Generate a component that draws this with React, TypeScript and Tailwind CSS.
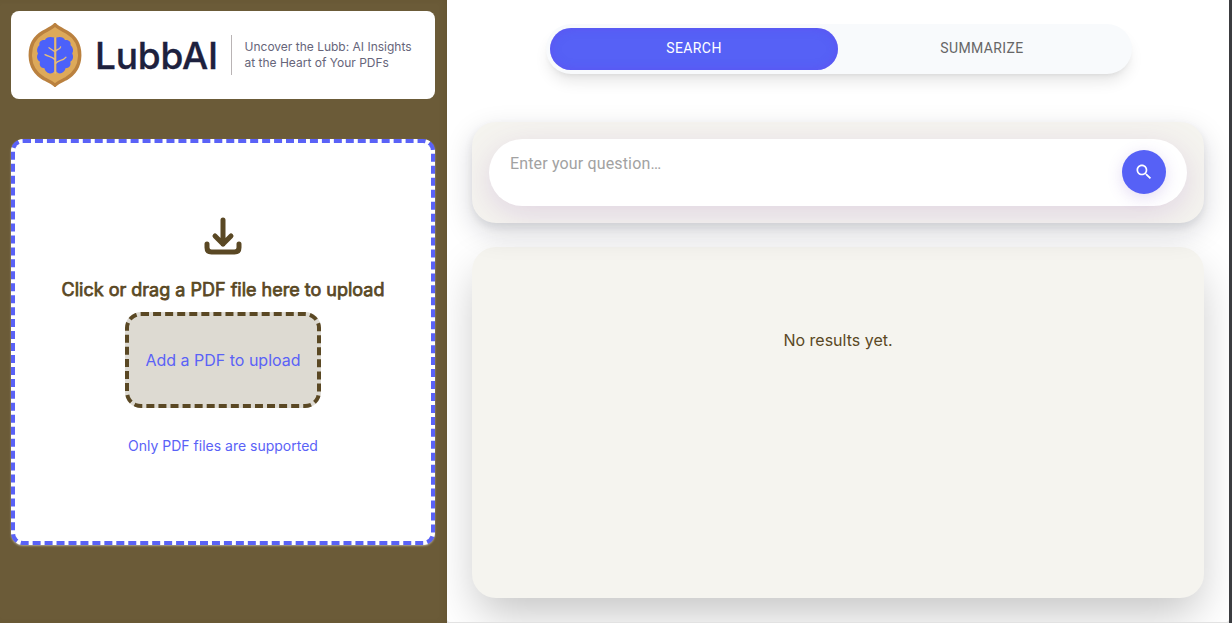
import React from "react";

function WalnutLogo() {
  return (
    <svg className="block h-16 w-[54px] shrink-0" viewBox="0 0 54 64" fill="none">
      <path
        d="M27 1.8C30 4.8 34 6.5 39 9.3C47 14 52 22 51.7 33C51.4 44 46 51 38 55.8C33.5 58 30 59 27 62.2C24 59 20.5 58 16 55.8C8 51 2.6 44 2.3 33C2 22 7 14 15 9.3C20 6.5 24 4.8 27 1.8Z"
        fill="#dda95a"
        stroke="#ba813f"
        strokeWidth="3.4"
      />
      <path
        d="M26.2 14.5C22 13.2 18 14.1 17 17C13 16.4 10.8 19 11.5 22C8.8 24.5 8.4 28 10 30.5C8.2 33.5 9 37 12 38.8C11 42.7 13 45.1 16.5 45.3C17.5 50.2 23.5 52.4 26.2 48.6ZM28.4 14.5C32 13.2 36 14.1 37 17C41 16.4 43.2 19 42.5 22C45.2 24.5 45.8 28 44.2 30.5C45.8 33.5 45.2 37 42.3 38.8C43.3 42.7 41 45.1 37.5 45.3C36.5 50.2 31 52.4 28.4 48.6Z"
        fill="#4b61fa"
      />
      <path
        d="M27.2 15V50M27.2 29L21 24.7M27.2 28.5C29 26 32 26.5 32.6 23.8M27.2 37C24 33 21 34 17 31.6M27.2 41C30 36.5 35 38.5 38 34.2"
        stroke="#e4bd7d"
        strokeWidth="1.3"
        strokeLinecap="round"
      />
    </svg>
  );
}

function DownloadIcon() {
  return (
    <svg
      className="block size-12"
      viewBox="0 0 48 48"
      fill="none"
      stroke="#5a4824"
      strokeWidth="5"
      strokeLinecap="round"
      strokeLinejoin="round"
    >
      <path d="M24 8V32M16 24L24 32L32 24M8 32V35.5Q8 40 12.5 40H35.5Q40 40 40 35.5V32" />
    </svg>
  );
}

function Sidebar() {
  return (
    <aside className="h-full w-[447px] shrink-0 bg-[#6b5b38] pt-[11px] pr-3 pl-[11px] shadow-[inset_-4px_0_8px_-4px_rgba(60,45,20,0.2)]">
      <header className="flex h-22 items-center rounded-lg bg-white pl-[17px]">
        <WalnutLogo />
        <div className="ml-[13px] w-[136px] shrink-0 whitespace-nowrap text-[37px] leading-none font-medium tracking-[-0.2px] text-[#1d213e] [-webkit-text-stroke:0.35px_#1d213e]">
          LubbAI
        </div>
        <div className="h-10 w-px shrink-0 bg-[#b9b4b5]" />
        <p className="ml-[12.5px] whitespace-nowrap text-[12px] leading-4 text-[#66657a]">
          Uncover the Lubb: AI Insights
          <br />
          at the Heart of Your PDFs
        </p>
      </header>
      <section className="mt-10 flex h-[406px] flex-col items-center rounded-xl border-4 border-dashed border-[#5a62f7] bg-white pt-[69px] shadow-[0_1px_2px_rgba(255,255,255,0.45)]">
        <DownloadIcon />
        <h2 className="mt-4 text-[18px] leading-7 font-normal whitespace-nowrap text-[#5a4824] [-webkit-text-stroke:0.75px_#5a4824]">
          Click or drag a PDF file here to upload
        </h2>
        <button className="mt-2 h-24 w-49 shrink-0 rounded-2xl border-4 border-dashed border-[#5a4824] bg-[#dddad2] text-[16px] whitespace-nowrap text-[#5a62f7]">
          Add a PDF to upload
        </button>
        <p className="mt-7 text-[14px] leading-5 text-[#5a62f7]">Only PDF files are supported</p>
      </section>
    </aside>
  );
}

function Tabs() {
  return (
    <nav className="ml-[74px] flex h-[50px] w-[586px] shrink-0 rounded-full bg-[#f8fafc] p-1 font-[Roboto,sans-serif] text-[14px] tracking-[0.4px] shadow-[0_10px_15px_-3px_rgba(0,0,0,0.1),0_4px_6px_-4px_rgba(0,0,0,0.1)]">
      <button className="h-[42px] w-72 rounded-full bg-[#5661f6] pb-0.5 text-white shadow-[inset_0_0_10px_rgba(99,70,240,0.5)]">
        SEARCH
      </button>
      <button className="h-[42px] w-72 pb-0.5 text-[#666666]">SUMMARIZE</button>
    </nav>
  );
}

function SearchPanel() {
  return (
    <section className="relative z-10 mt-12 h-[101px] shrink-0 overflow-hidden rounded-3xl bg-[#f5f4ef] px-[17px] pt-[17px] shadow-[0_10px_28px_rgba(15,20,40,0.17),0_4px_8px_rgba(15,20,40,0.08)]">
      <div className="flex h-[67px] rounded-full bg-white pr-[21px] pl-[21px] shadow-[0_8px_32px_rgba(130,65,165,0.18)]">
        <div className="flex-1 pt-[13px] font-[Roboto,sans-serif] text-[16px] leading-6 tracking-[0.15px] text-[#a2a2a2]">
          Enter your question…
        </div>
        <button className="mt-[11px] flex size-11 items-center justify-center rounded-full bg-[#5661f6] shadow-[0_4px_16px_rgba(120,80,200,0.2)]">
          <svg className="size-5" viewBox="0 0 24 24" fill="white">
            <path d="M15.5 14h-.79l-.28-.27C15.41 12.59 16 11.11 16 9.5 16 5.91 13.09 3 9.5 3S3 5.91 3 9.5 5.91 16 9.5 16c1.61 0 3.09-.59 4.23-1.57l.27.28v.79l5 4.99L20.49 19l-4.99-5zm-6 0C7.01 14 5 11.99 5 9.5S7.01 5 9.5 5 14 7.01 14 9.5 11.99 14 9.5 14z" />
          </svg>
        </button>
      </div>
    </section>
  );
}

export default function App() {
  return (
    <div className="flex h-[623px] w-[1232px] overflow-hidden bg-[#3b3c40] font-[Inter,sans-serif]">
      <Sidebar />
      <div className="h-full w-[782px] bg-[#e2e2e2] pb-px">
        <main className="flex h-full flex-col overflow-hidden rounded-b-[3px] bg-white pt-6 pr-[25px] pl-[25px]">
          <Tabs />
          <SearchPanel />
          <section className="mt-6 h-[351px] shrink-0 rounded-3xl bg-[#f5f4ef] pt-[81px] text-center text-[16px] leading-6 text-[#5a4824] shadow-[0_20px_45px_-5px_rgba(0,0,0,0.24)]">
            No results yet.
          </section>
        </main>
      </div>
      <div className="h-full w-[3px] bg-[#3b3c40]" />
    </div>
  );
}
